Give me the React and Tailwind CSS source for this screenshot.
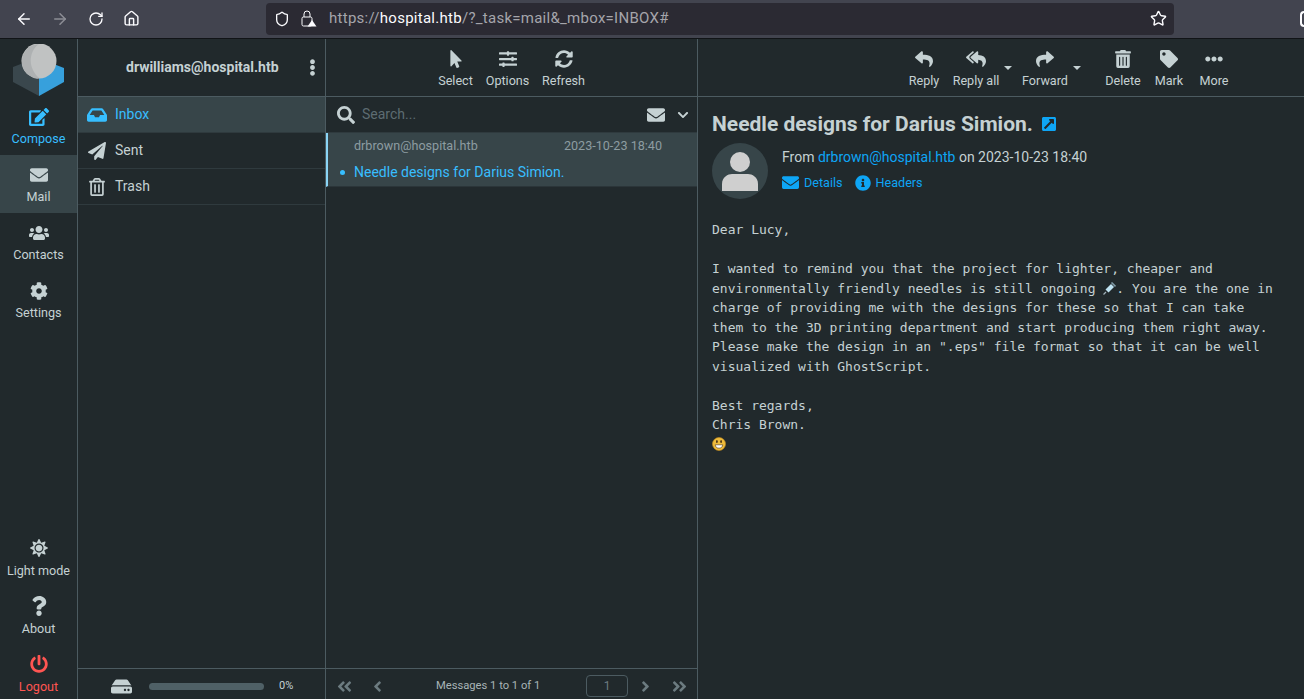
import React from "react";
import {
	FaEdit,
	FaEnvelope,
	FaUsers,
	FaCog,
	FaSun,
	FaQuestion,
	FaPowerOff,
	FaInbox,
	FaPaperPlane,
	FaRegTrashAlt,
	FaMousePointer,
	FaSlidersH,
	FaSyncAlt,
	FaSearch,
	FaChevronDown,
	FaReply,
	FaReplyAll,
	FaShare,
	FaTrashAlt,
	FaTag,
	FaEllipsisH,
	FaEllipsisV,
	FaExternalLinkSquareAlt,
	FaInfoCircle,
	FaHdd,
	FaAngleDoubleLeft,
	FaAngleDoubleRight,
	FaAngleLeft,
	FaAngleRight,
} from "react-icons/fa";
import { LuArrowLeft, LuArrowRight, LuRotateCw, LuHouse, LuShield, LuStar } from "react-icons/lu";

function Logo() {
	return (
		<svg width="52" height="52" viewBox="0 0 52 52">
			<path d="M0 23 L13 18 L26 30 L26 52 L0 38 Z" fill="#3a474d" />
			<path d="M26 30 L38 19 L51 24 L51 38 L26 52 Z" fill="#37a0dc" />
			<circle cx="26" cy="17" r="17.5" fill="#c0c2c2" />
			<path d="M26 0 A17.5 17.5 0 0 0 14 30 C24 37 26 34 26 34 C15 24 15 8 26 0 Z" fill="#aeb1b2" />
		</svg>
	);
}

function NavItem({ icon: Icon, label, size = 18, className = "text-[#c5d1d3]", labelClass = "mt-[2px]", active }) {
	return (
		<div className={`flex h-[58px] flex-col items-center pt-[8px] text-[#c5d1d3] ${active ? "bg-[#374549]" : ""} ${className}`}>
			<div className="flex h-[24px] items-center justify-center">
				<Icon size={size} />
			</div>
			<span className={`whitespace-nowrap text-[12.6px] leading-[16px] ${labelClass}`}>{label}</span>
		</div>
	);
}

function ToolButton({ icon: Icon, label, size = 18, width, caret }) {
	return (
		<div className={`relative flex flex-col items-center text-[#c5d1d3] ${width}`}>
			<div className="flex h-[24px] items-center justify-center">
				<Icon size={size} />
			</div>
			<span className="mt-[2px] whitespace-nowrap text-[12.6px] leading-[16px]">{label}</span>
			{caret && (
				<span className="absolute right-[-12px] top-[19px] h-0 w-0 border-x-[4px] border-t-[4px] border-x-transparent border-t-[#c5d1d3]" />
			)}
		</div>
	);
}

function FolderRow({ icon: Icon, label, active, size = 18 }) {
	return (
		<div
			className={`flex h-[36px] items-center border-b border-[#2f3a3e] pl-[9px] text-[14px] ${active ? "bg-[#374549] text-[#37beff]" : "text-[#c5d1d3]"}`}
		>
			<span className="flex w-[20px] justify-center">
				<Icon size={size} />
			</span>
			<span className="ml-[8px]">{label}</span>
		</div>
	);
}

function Syringe() {
	return (
		<svg className="inline-block align-[-2px]" width="13" height="13" viewBox="0 0 13 13">
			<path d="M2.5 7.5 L8 2 L11 5 L5.5 10.5 Z" fill="#bfe3f2" />
			<path d="M3 10 L0.5 12.5" stroke="#9fb0b8" strokeWidth="1.2" />
			<path d="M8.5 0.5 L12.5 4.5" stroke="#7f9aa6" strokeWidth="1.6" />
		</svg>
	);
}

function Smiley() {
	return (
		<svg width="14" height="14" viewBox="0 0 14 14">
			<circle cx="7" cy="7" r="6.5" fill="#eebb3c" stroke="#c98f1c" strokeWidth="0.6" />
			<ellipse cx="4.9" cy="4.4" rx="0.9" ry="1.5" fill="#4a3418" />
			<ellipse cx="9.1" cy="4.4" rx="0.9" ry="1.5" fill="#4a3418" />
			<path d="M3.2 7.8 H10.8 C10.6 10 9 11.2 7 11.2 C5 11.2 3.4 10 3.2 7.8 Z" fill="#fff" stroke="#4a3418" strokeWidth="0.6" />
		</svg>
	);
}

function BrowserBar() {
	return (
		<div className="flex h-[39px] shrink-0 items-center overflow-hidden border-b border-[#111417] bg-[#42444f] pb-[1px] text-[#fbfbfe]">
			<div className="flex w-[266px] shrink-0 items-center">
				<LuArrowLeft size={18} className="ml-[15px]" />
				<LuArrowRight size={18} className="ml-[18px] opacity-40" />
				<LuRotateCw size={16} className="ml-[19px]" />
				<LuHouse size={17} className="ml-[19px]" />
			</div>
			<div className="flex h-[32px] w-[908px] shrink-0 items-center rounded-[4px] bg-[#2b2a33] pl-[8px] text-[15px]">
				<LuShield size={16} />
				<span className="relative ml-[11px] flex h-[18px] w-[16px] items-center">
					<svg width="16" height="17" viewBox="0 0 16 17" fill="none">
						<rect x="1" y="7" width="10" height="9" rx="1.5" stroke="#fbfbfe" strokeWidth="1" />
						<path d="M3 7 V4 a3 3 0 0 1 6 0 V7" stroke="#fbfbfe" strokeWidth="1" />
						<path d="M11 10 L15.5 16.5 H6.5 Z" fill="#fbfbfe" />
					</svg>
				</span>
				<span className="ml-[12px] whitespace-nowrap tracking-[0.27px] text-[#a5a5ab]">
					https://<span className="text-[#fbfbfe]">hospital.htb</span>/?_task=mail&amp;_mbox=INBOX#
				</span>
				<LuStar size={17} className="ml-auto mr-[7px]" />
			</div>
			<span className="ml-[126px] h-[16px] w-[8px] rounded-l-[4px] border-2 border-r-0 border-[#fbfbfe]" />
		</div>
	);
}

function Sidebar() {
	return (
		<div className="flex w-[78px] shrink-0 flex-col border-r border-[#4c5b61]">
			<div className="flex h-[58px] justify-center pt-[5px]">
				<Logo />
			</div>
			<NavItem icon={FaEdit} label="Compose" size={20} className="!text-[#37beff]" />
			<NavItem icon={FaEnvelope} label="Mail" active />
			<NavItem icon={FaUsers} label="Contacts" size={20} />
			<NavItem icon={FaCog} label="Settings" />
			<div className="flex-1" />
			<NavItem icon={FaSun} label="Light mode" labelClass="mt-[3px]" />
			<NavItem icon={FaQuestion} label="About" size={20} labelClass="mt-[3px]" />
			<NavItem icon={FaPowerOff} label="Logout" size={18} labelClass="mt-[3px]" className="!h-[55px] !text-[#ff5552]" />
		</div>
	);
}

function FolderPane() {
	return (
		<div className="flex w-[248px] shrink-0 flex-col border-r border-[#4c5b61]">
			<div className="relative flex h-[58px] shrink-0 items-center border-b border-[#4c5b61] pl-[48px] text-[14px] font-bold text-[#c5d1d3]">
				drwilliams@hospital.htb
				<FaEllipsisV size={17} className="absolute right-[4px] top-[20px]" />
			</div>
			<FolderRow icon={FaInbox} label="Inbox" active size={20} />
			<FolderRow icon={FaPaperPlane} label="Sent" />
			<FolderRow icon={FaRegTrashAlt} label="Trash" />
			<div className="flex-1" />
			<div className="flex h-[31px] shrink-0 items-center border-t border-[#4c5b61] pt-[4px] text-[#c5d1d3]">
				<FaHdd size={21} className="ml-[33px]" />
				<div className="ml-[17px] h-[7px] w-[115px] rounded-full bg-[#4f6066]" />
				<span className="ml-[15px] text-[11px]">0%</span>
			</div>
		</div>
	);
}

function ListPane() {
	return (
		<div className="flex w-[372px] shrink-0 flex-col border-r border-[#4c5b61]">
			<div className="flex h-[58px] shrink-0 justify-center gap-[12px] border-b border-[#4c5b61] pt-[8px]">
				<ToolButton icon={FaMousePointer} label="Select" width="w-[36px]" />
				<ToolButton icon={FaSlidersH} label="Options" width="w-[44px]" />
				<ToolButton icon={FaSyncAlt} label="Refresh" width="w-[44px]" />
			</div>
			<div className="flex h-[36px] shrink-0 items-center border-b border-[#2f3a3e] pl-[11px] text-[#c5d1d3]">
				<FaSearch size={18} />
				<span className="ml-[7px] text-[14px] text-[#5d6c72]">Search...</span>
				<FaEnvelope size={18} className="ml-auto" />
				<FaChevronDown size={12} className="ml-[12px] mr-[8px]" />
			</div>
			<div className="h-[54px] shrink-0 border-b border-[#2b3539] border-l-2 border-l-[#8ad4f5] bg-[#374549]">
				<div className="flex h-[26px] items-center justify-between pl-[26px] pr-[35px] text-[12.6px] text-[#8d9ca1]">
					<span>drbrown@hospital.htb</span>
					<span>2023-10-23 18:40</span>
				</div>
				<div className="flex h-[26px] items-center pl-[12px] text-[14px] text-[#37beff]">
					<span className="h-[5px] w-[5px] rounded-full bg-[#37beff]" />
					<span className="ml-[9px]">Needle designs for Darius Simion.</span>
				</div>
			</div>
			<div className="flex-1" />
			<div className="flex h-[31px] shrink-0 items-center border-t border-[#4c5b61] pt-[4px] text-[#6c7b80]">
				<FaAngleDoubleLeft size={17} className="ml-[10px]" />
				<FaAngleLeft size={17} className="ml-[16px]" />
				<span className="ml-[50px] w-[120px] text-[11.2px] text-[#a8b4b7]">Messages 1 to 1 of 1</span>
				<span className="ml-[30px] flex h-[22px] w-[42px] items-center justify-center rounded-[4px] border border-[#4c5b61] text-[12px] text-[#6c7b80]">
					1
				</span>
				<FaAngleRight size={17} className="ml-[9px]" />
				<FaAngleDoubleRight size={17} className="ml-[17px]" />
			</div>
		</div>
	);
}

function MessagePane() {
	return (
		<div className="flex min-w-0 flex-1 flex-col">
			<div className="flex h-[58px] shrink-0 border-b border-[#4c5b61] pl-[207px] pt-[8px]">
				<ToolButton icon={FaReply} label="Reply" width="w-[38px]" />
				<ToolButton icon={FaReplyAll} label="Reply all" width="w-[48px] ml-[9px]" size={20} caret />
				<ToolButton icon={FaShare} label="Forward" width="w-[48px] ml-[21px]" caret />
				<ToolButton icon={FaTrashAlt} label="Delete" width="w-[36px] ml-[36px]" />
				<ToolButton icon={FaTag} label="Mark" width="w-[30px] ml-[13px]" />
				<ToolButton icon={FaEllipsisH} label="More" width="w-[30px] ml-[15px]" />
			</div>
			<div className="px-[14px]">
				<div className="mt-[15px] flex items-center text-[21px] font-bold leading-[24px] text-[#c5d1d3]">
					Needle designs for Darius Simion.
					<FaExternalLinkSquareAlt size={16} className="ml-[8px] text-[#0ea5f5]" />
				</div>
				<div className="mt-[7px] flex">
					<div className="flex h-[56px] w-[56px] items-center justify-center overflow-hidden rounded-full bg-[#374549] text-[#cfcfcf]">
						<svg width="36" height="40" viewBox="0 0 36 40" fill="currentColor">
							<circle cx="18" cy="11" r="10" />
							<path d="M0 40 V33 C0 26 6 23 10 23 H26 C30 23 36 26 36 33 V40 Z" />
						</svg>
					</div>
					<div className="ml-[14px] text-[14px] text-[#c5d1d3]">
						<div className="mt-[4px] leading-[20px]">
							From <span className="text-[#0ea5f5]">drbrown@hospital.htb</span> on 2023-10-23 18:40
						</div>
						<div className="mt-[7px] flex items-center text-[12.6px] leading-[16px] text-[#0ea5f5]">
							<FaEnvelope size={17} />
							<span className="ml-[5px]">Details</span>
							<FaInfoCircle size={16} className="ml-[12px]" />
							<span className="ml-[5px]">Headers</span>
						</div>
					</div>
				</div>
				<div className="mt-[21px] whitespace-pre font-['DejaVu_Sans_Mono',monospace] text-[13px] leading-[19.5px] text-[#c5d1d3]">
					<div>Dear Lucy,</div>
					<div>&nbsp;</div>
					<div>I wanted to remind you that the project for lighter, cheaper and</div>
					<div>
						environmentally friendly needles is still ongoing <Syringe />. You are the one in
					</div>
					<div>charge of providing me with the designs for these so that I can take</div>
					<div>them to the 3D printing department and start producing them right away.</div>
					<div>Please make the design in an ".eps" file format so that it can be well</div>
					<div>visualized with GhostScript.</div>
					<div>&nbsp;</div>
					<div>Best regards,</div>
					<div>Chris Brown.</div>
					<div className="flex h-[19.5px] items-center">
						<Smiley />
					</div>
				</div>
			</div>
		</div>
	);
}

export default function App() {
	return (
		<div className="flex h-[699px] w-[1304px] flex-col overflow-hidden bg-[#21292c] font-['Roboto',sans-serif]">
			<BrowserBar />
			<div className="flex min-h-0 flex-1">
				<Sidebar />
				<FolderPane />
				<ListPane />
				<MessagePane />
			</div>
		</div>
	);
}
